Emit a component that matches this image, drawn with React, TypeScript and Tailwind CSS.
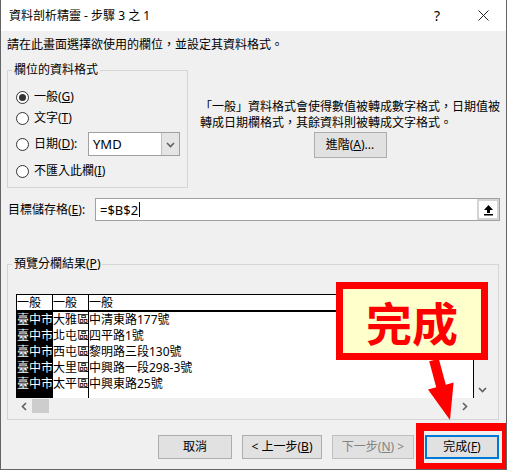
import React from 'react';

const rows = [
  ['臺中市', '大雅區', '中清東路177號'],
  ['臺中市', '北屯區', '四平路1號'],
  ['臺中市', '西屯區', '黎明路三段130號'],
  ['臺中市', '大里區', '中興路一段298-3號'],
  ['臺中市', '太平區', '中興東路25號'],
];

const Radio: React.FC<{ checked?: boolean }> = ({ checked }) => (
  <span className="w-[13px] h-[13px] rounded-full border border-[#333] bg-white flex items-center justify-center shrink-0">
    {checked && <span className="w-[7px] h-[7px] rounded-full bg-[#333]" />}
  </span>
);

const Chevron: React.FC<{ dir: 'up' | 'down' | 'left' | 'right' }> = ({ dir }) => {
  const d = {
    up: 'M1 6 L4.5 2.5 L8 6',
    down: 'M1 3 L4.5 6.5 L8 3',
    left: 'M6 1 L2.5 4.5 L6 8',
    right: 'M3 1 L6.5 4.5 L3 8',
  }[dir];
  return (
    <svg width="9" height="9" viewBox="0 0 9 9">
      <path d={d} fill="none" stroke="#606060" strokeWidth="1.6" />
    </svg>
  );
};

const Button: React.FC<{ children: React.ReactNode; w: string; disabled?: boolean; primary?: boolean }> = ({
  children,
  w,
  disabled,
  primary,
}) => (
  <div
    className={
      primary
        ? 'h-[24px] flex items-center justify-center bg-[#e1e1e1] border-2 border-[#0078d7] ' + w
        : disabled
        ? 'h-[24px] flex items-center justify-center bg-[#e1e1e1] border border-[#bfbfbf] text-[#838383] ' + w
        : 'h-[24px] flex items-center justify-center bg-[#e1e1e1] border border-[#adadad] ' + w
    }
  >
    {children}
  </div>
);

export default function App() {
  return (
    <div className="relative w-[507px] h-[470px] overflow-hidden bg-[#f0f0f0] border-x border-b border-[#646464] text-black text-[12px] leading-[16px] font-['Noto_Sans','Noto_Sans_CJK_TC',sans-serif]">
      {/* title bar */}
      <div className="h-[31px] bg-white flex items-center pl-[8px]">
        <span className="text-[12px]">資料剖析精靈 - 步驟 3 之 1</span>
        <div className="ml-auto flex items-center h-full">
          <div className="w-[46px] h-full flex items-center justify-center text-[14px]">?</div>
          <div className="w-[46px] h-full flex items-center justify-center">
            <svg width="11" height="11" viewBox="0 0 11 11">
              <path d="M0.5 0.5 L10.5 10.5 M10.5 0.5 L0.5 10.5" stroke="#222" strokeWidth="1" />
            </svg>
          </div>
        </div>
      </div>

      <div className="px-[6px]">
        <p className="mt-[6px]">請在此畫面選擇欲使用的欄位，並設定其資料格式。</p>

        <div className="flex mt-[9px]">
          <fieldset className="w-[182px] border border-[#d5d5d5] pl-[8px] pr-[7px] pb-[6px]">
            <legend className="-ml-[4px] px-[2px] leading-[16px]">欄位的資料格式</legend>
            <div className="flex flex-col mt-[9px]">
              <label className="h-[20px] flex items-center gap-[5px]">
                <Radio checked />
                <span>
                  一般(<u>G</u>)
                </span>
              </label>
              <label className="h-[20px] mt-[1px] flex items-center gap-[5px]">
                <Radio />
                <span>
                  文字(<u>T</u>)
                </span>
              </label>
              <div className="h-[24px] mt-[4px] flex items-center gap-[5px]">
                <Radio />
                <span>
                  日期(<u>D</u>):
                </span>
                <div className="ml-auto w-[92px] h-[24px] border border-[#a0a0a0] bg-white flex">
                  <span className="flex-1 pl-[4px] flex items-center text-[13px]">YMD</span>
                  <span className="w-[18px] bg-[#e5e5e5] border-l border-[#c0c0c0] flex items-center justify-center">
                    <Chevron dir="down" />
                  </span>
                </div>
              </div>
              <label className="h-[20px] mt-[5px] flex items-center gap-[5px]">
                <Radio />
                <span>
                  不匯入此欄(<u>I</u>)
                </span>
              </label>
            </div>
          </fieldset>

          <div className="ml-[12px] w-[300px] flex flex-col">
            <p className="mt-[37px] whitespace-nowrap">
              「一般」資料格式會使得數值被轉成數字格式，日期值被
              <br />
              轉成日期欄格式，其餘資料則被轉成文字格式。
            </p>
            <div className="mt-[1px] self-center w-[73px] h-[26px] bg-[#e1e1e1] border border-[#adadad] flex items-center justify-center">
              進階(<u>A</u>)...
            </div>
          </div>
        </div>

        {/* target cell */}
        <div className="flex items-center mt-[10px] h-[23px]">
          <span className="w-[88px] pl-[1px]">
            目標儲存格(<u>E</u>):
          </span>
          <div className="flex-1 h-[23px] border border-[#a0a0a0] bg-white flex">
            <div className="flex-1 flex items-center pl-[4px] text-[13px]">
              =$B$2
              <span className="w-[1px] h-[15px] bg-black ml-[1px]" />
            </div>
            <div className="w-[22px] bg-[#d4d4d4] p-[2px]">
              <div className="w-full h-full bg-white flex items-center justify-center">
                <svg width="11" height="12" viewBox="0 0 11 12">
                  <path d="M5.5 1 L10 6 L7 6 L7 9 L4 9 L4 6 L1 6 Z" fill="#000" />
                  <rect x="1" y="10" width="9" height="1.5" fill="#000" />
                </svg>
              </div>
            </div>
          </div>
        </div>

        {/* preview */}
        <fieldset className="mt-[35px] w-[492px] border border-[#d5d5d5] pl-[8px] pr-[7px] pb-[5px]">
          <legend className="-ml-[4px] px-[2px] leading-[16px]">
            預覽分欄結果(<u>P</u>)
          </legend>
          <div className="mt-[22px] w-[475px] flex flex-col">
            <div className="flex h-[104px]">
              <div className="flex bg-white w-[458px] overflow-hidden">
                {[0, 1, 2].map((c) => (
                  <div
                    key={c}
                    className={
                      c === 0
                        ? 'flex flex-col w-[37px] border-l border-r border-black shrink-0'
                        : c === 1
                        ? 'flex flex-col w-[36px] border-r border-black shrink-0'
                        : 'flex flex-col flex-1 border-r border-black'
                    }
                  >
                    <div className="h-[18px] border-t border-b-2 border-black bg-white leading-[15px] whitespace-nowrap">
                      一般
                    </div>
                    <div className={c === 0 ? 'flex-1 bg-black text-white' : 'flex-1'}>
                      {rows.map((r, i) => (
                        <div key={i} className="h-[16px] leading-[16px] whitespace-nowrap overflow-hidden">
                          {r[c]}
                        </div>
                      ))}
                    </div>
                  </div>
                ))}
              </div>
              <div className="w-[17px] flex flex-col items-center justify-between py-[4px]">
                <Chevron dir="up" />
                <div className="w-[9px] h-[33px] bg-[#cdcdcd] -mt-[28px]" />
                <Chevron dir="down" />
              </div>
            </div>
            <div className="h-[16px] flex items-center w-[458px] pl-[4px] pr-[5px]">
              <Chevron dir="left" />
              <div className="ml-[3px] w-[17px] h-[14px] bg-[#cdcdcd]" />
              <div className="ml-auto">
                <Chevron dir="right" />
              </div>
            </div>
          </div>
        </fieldset>

        {/* buttons */}
        <div className="flex justify-end mt-[15px] pr-[1px] gap-[10px]">
          <Button w="w-[74px]">取消</Button>
          <Button w="w-[80px]">
            &lt; 上一步(<u>B</u>)
          </Button>
          <Button w="w-[82px]" disabled>
            下一步(<u>N</u>) &gt;
          </Button>
          <div className="ml-[1px]">
            <Button w="w-[74px]" primary>
              完成(<u>F</u>)
            </Button>
          </div>
        </div>
      </div>

      {/* annotations */}
      <div className="absolute left-[335px] top-[282px] w-[152px] h-[78px] border-[7px] border-[#ff0000] bg-[#ffffcc] flex items-center justify-center">
        <span className="text-[46px] leading-none font-bold text-[#ff0000] font-['Noto_Sans_CJK_TC',sans-serif]">完成</span>
      </div>
      <svg className="absolute left-0 top-0" width="507" height="470" viewBox="0 0 507 470">
        <polygon
          points="437.8,358.7 428.2,361.3 435.2,387.3 427,389.5 449,420 452.6,382.6 444.8,384.7"
          fill="#ff0000"
        />
      </svg>
      <div className="absolute left-[415px] top-[423px] w-[92px] h-[47px] border-[8px] border-r-[6px] border-b-[7px] border-[#ff0000]" />
    </div>
  );
}
